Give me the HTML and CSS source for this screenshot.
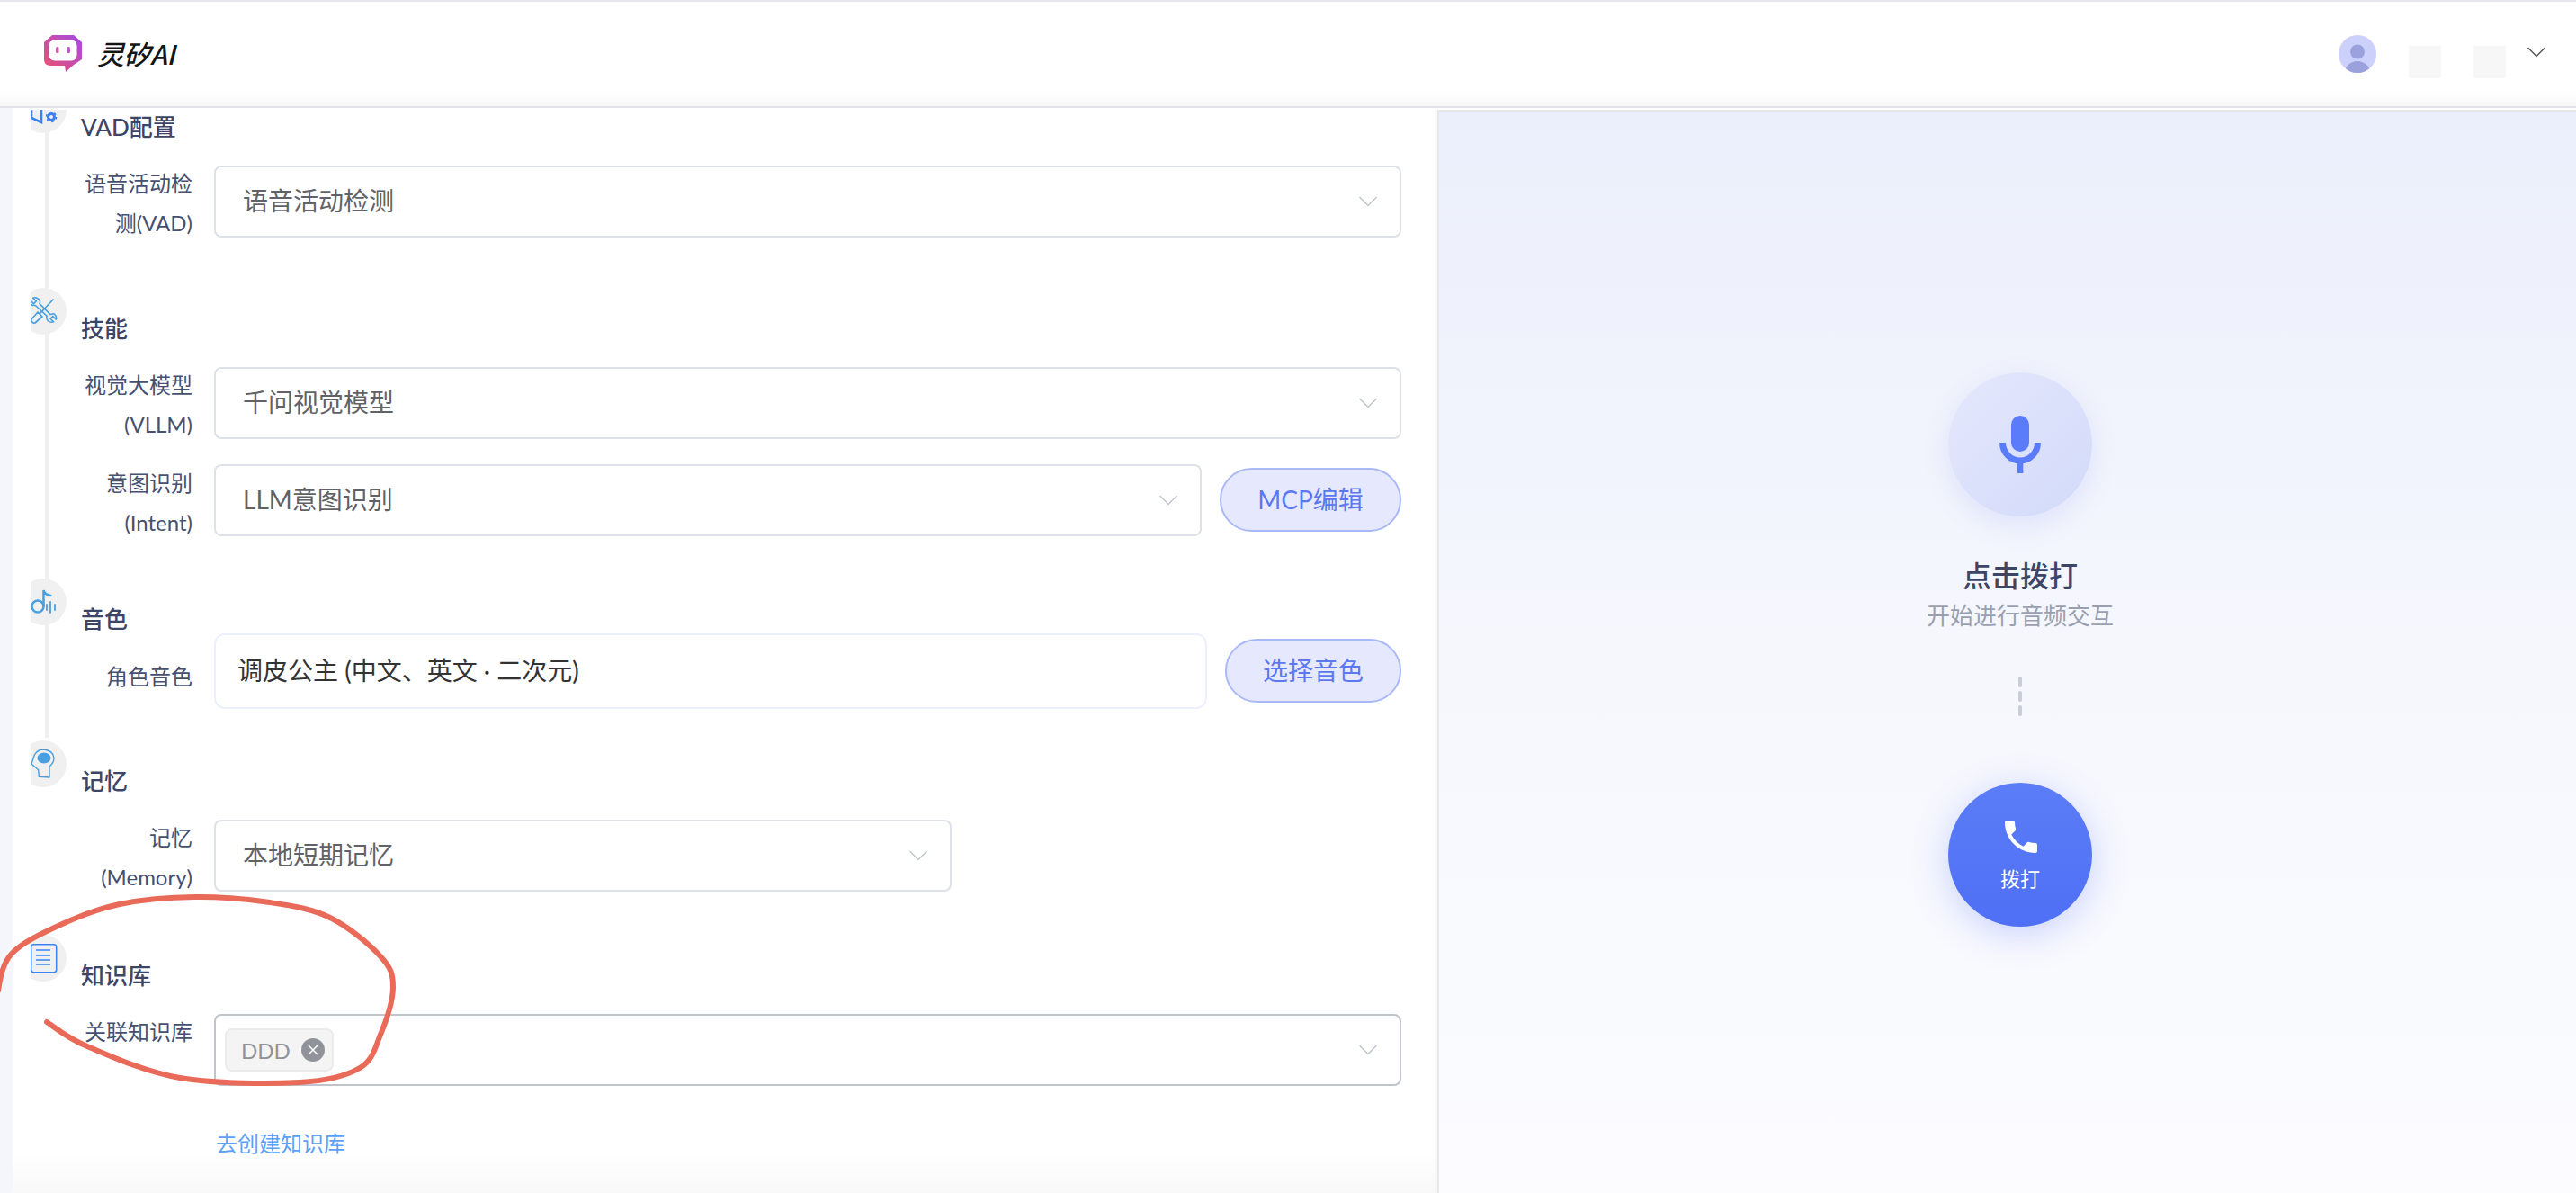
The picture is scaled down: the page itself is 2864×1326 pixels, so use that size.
FILE: index.html
```html
<!DOCTYPE html>
<html lang="zh-CN">
<head>
<meta charset="utf-8">
<title>灵矽AI</title>
<link rel="stylesheet" href="styles.css">
</head>
<body>
<div class="app">
  <header class="header">
    <div class="brand">
      <svg class="logo" viewBox="0 0 42 41">
        <defs><linearGradient id="lg" x1="0" y1="1" x2="1" y2="0"><stop offset="0" stop-color="#f0506a"/><stop offset="1" stop-color="#a24be6"/></linearGradient></defs>
        <path d="M9 0H33L42 8V27L33 33L24 41L23 34H7Q0 34 0 27V8Z" fill="url(#lg)"/>
        <rect x="5.500" y="5.500" width="31" height="23" rx="6" fill="#fff"/>
        <rect x="13" y="13" width="3.500" height="7" rx="1.500" fill="#d95aa8"/>
        <rect x="25.500" y="13" width="3.500" height="7" rx="1.500" fill="#c455c8"/>
      </svg>
      <span class="brand-name">灵矽AI</span>
    </div>
    <div class="user">
      <svg class="avatar" viewBox="0 0 42 42">
        <defs><clipPath id="ac"><circle cx="21" cy="21" r="21"/></clipPath></defs>
        <circle cx="21" cy="21" r="21" fill="#ccd1fb"/>
        <g clip-path="url(#ac)" fill="#9aa1dd"><circle cx="21" cy="18.500" r="8"/><ellipse cx="21" cy="42" rx="14" ry="13"/></g>
      </svg>
      <span class="blank"></span>
      <span class="blank"></span>
      <svg class="user-arrow" viewBox="0 0 20 12"><path d="M.5 1 10 10.500 19.500 1" fill="none" stroke="#555" stroke-width="1.500"/></svg>
    </div>
  </header>

  <main class="main">
    <section class="config">
      <div class="rail"></div>

      <div class="group group-first">
        <h2 class="title">
          <span class="node"><svg viewBox="0 0 52 52"><path d="M13 26v9l11 5V26" fill="none" stroke="#3b7ff0" stroke-width="2.500"/><circle cx="35" cy="34" r="3.500" fill="none" stroke="#3b7ff0" stroke-width="3"/><circle cx="35" cy="34" r="5.500" fill="none" stroke="#3b7ff0" stroke-width="1.500" stroke-dasharray="2.500 3.260"/></svg></span>
          VAD配置
        </h2>
        <div class="row">
          <label class="label">语音活动检测(VAD)</label>
          <div class="select"><span class="value">语音活动检测</span><svg class="arrow" viewBox="0 0 20 12"><path d="M.5 1 10 10.500 19.500 1"/></svg></div>
        </div>
      </div>

      <div class="group group-skill">
        <h2 class="title">
          <span class="node"><svg viewBox="0 0 52 52" fill="none" stroke="#4a9fe0" stroke-width="1.700" stroke-linejoin="round" stroke-linecap="round"><path d="M14 13l4 4 3-3-4-4c3-1 7 0 8 3 1 2 0 4 0 4l13 13 4-1c2 1 4 4 3 7l-4-4-3 3 4 4c-3 1-7 0-8-3-1-2 0-4 0-4L20 19l-3 0c-3-1-4-4-3-6z" transform="translate(-1 2) scale(.92)"/><path d="M37 13 23 28"/><path d="M20 27l5 5-8 7c-2 1-5-2-4-4z"/></svg></span>
          技能
        </h2>
        <div class="row">
          <label class="label">视觉大模型(VLLM)</label>
          <div class="select"><span class="value">千问视觉模型</span><svg class="arrow" viewBox="0 0 20 12"><path d="M.5 1 10 10.500 19.500 1"/></svg></div>
        </div>
        <div class="row row-next">
          <label class="label label-high">意图识别(Intent)</label>
          <div class="select"><span class="value">LLM意图识别</span><svg class="arrow" viewBox="0 0 20 12"><path d="M.5 1 10 10.500 19.500 1"/></svg></div>
          <button class="pill pill-mcp">MCP编辑</button>
        </div>
      </div>

      <div class="group group-voice">
        <h2 class="title">
          <span class="node"><svg viewBox="0 0 52 52" fill="none" stroke="#4a9fe0" stroke-linecap="round"><circle cx="20" cy="31" r="6.500" stroke-width="2.500"/><path d="M26.500 31V13q1 5 8 6" stroke-width="2.500"/><path d="M30 29v6M34 26v12M39 29v6" stroke-width="1.800"/></svg></span>
          音色
        </h2>
        <div class="row row-voice">
          <label class="label label-single">角色音色</label>
          <div class="voice-input">调皮公主 (中文、英文 · 二次元)</div>
          <button class="pill pill-voice">选择音色</button>
        </div>
      </div>

      <div class="group group-memory">
        <h2 class="title">
          <span class="node"><svg viewBox="0 0 52 52"><path d="M21.300 40.300 20.700 32.700 13 26l3.300-10Q20 10 26.300 10 37 11 38 19.300 38 25 33 29V41Z" fill="none" stroke="#4a9fe0" stroke-width="1.400" stroke-linejoin="round"/><ellipse cx="27" cy="19.500" rx="7.500" ry="6" fill="#4a9fe0"/></svg></span>
          记忆
        </h2>
        <div class="row">
          <label class="label">记忆(Memory)</label>
          <div class="select select-short"><span class="value">本地短期记忆</span><svg class="arrow" viewBox="0 0 20 12"><path d="M.5 1 10 10.500 19.500 1"/></svg></div>
        </div>
      </div>

      <div class="group group-kb">
        <h2 class="title">
          <span class="node"><svg viewBox="0 0 52 52" fill="none" stroke="#3b82f6"><rect x="12.700" y="10.700" width="28" height="31" rx="3" stroke-width="1.500"/><path d="M18 17h16M18 23h16M18 28h16M18 33h16" stroke-width="1.300"/></svg></span>
          知识库
        </h2>
        <div class="row">
          <label class="label">关联知识库</label>
          <div class="select select-active">
            <span class="tag">DDD<i class="tag-close"><svg viewBox="0 0 26 26"><path d="M8 8l10 10M18 8 8 18" stroke="#fff" stroke-width="1.500"/></svg></i></span>
            <svg class="arrow" viewBox="0 0 20 12"><path d="M.5 1 10 10.500 19.500 1"/></svg>
          </div>
        </div>
        <a class="create-link">去创建知识库</a>
      </div>
    </section>

    <section class="call">
      <div class="mic">
        <svg viewBox="0 0 46 64" class="mic-icon"><rect x="13" y="0" width="20" height="40" rx="10" fill="#5b7cfa"/><path d="M3.500 30a19.500 20 0 0 0 39 0" fill="none" stroke="#5b7cfa" stroke-width="7"/><rect x="19.800" y="50" width="6.500" height="14" fill="#5b7cfa"/></svg>
      </div>
      <div class="call-title">点击拨打</div>
      <div class="call-sub">开始进行音频交互</div>
      <div class="dashes"><i></i><i></i><i></i></div>
      <div class="dial">
        <svg viewBox="0 0 24 24" class="dial-icon"><path fill="#fff" d="M6.620 10.790c1.440 2.830 3.760 5.140 6.590 6.590l2.200-2.200c.27-.27.67-.36 1.020-.24 1.120.37 2.330.57 3.570.57.550 0 1 .45 1 1V20c0 .55-.45 1-1 1-9.390 0-17-7.610-17-17 0-.55.45-1 1-1h3.500c.55 0 1 .45 1 1 0 1.250.2 2.450.57 3.570.11.35.03.74-.25 1.020l-2.200 2.200z"/></svg>
        <span class="dial-text">拨打</span>
      </div>
    </section>
  </main>

  <svg class="scribble" viewBox="0 0 2864 1326">
    <path d="M52 1136C59.500 1140.500 72.300 1152.700 97 1163C121.700 1173.300 160.700 1191.300 200 1198C239.300 1204.700 299.700 1204.800 333 1203C366.300 1201.200 385 1195.800 400 1187C415 1178.200 416.800 1165 423 1150C429.200 1135 437 1111.500 437 1097C437 1082.500 434.700 1075.800 423 1063C411.300 1050.200 387.500 1030 367 1020C346.500 1010 325 1006.800 300 1003C275 999.200 244.800 996.700 217 997C189.200 997.300 158 999.800 133 1005C108 1010.200 87 1018.800 67 1028C47 1037.200 24.200 1047.800 13 1060C1.800 1072.200 0 1090 -2 1101" fill="none" stroke="#e96a58" stroke-width="6" stroke-linecap="round"/>
  </svg>
</div>
</body>
</html>
```
FILE: styles.css
```css
* { box-sizing: border-box; }
html, body { margin: 0; height: 100%; overflow: hidden; }
body {
  font-family: "Lato", "Noto Sans CJK SC", sans-serif;
  color: #3d4566;
  background: #fff;
}
.app {
  position: relative;
  width: 2864px;
  height: 1326px;
  display: flex;
  flex-direction: column;
  border-top: 2px solid #e6e6ec;
}
.header {
  height: 118px;
  flex: none;
  display: flex;
  align-items: center;
  justify-content: space-between;
  padding: 0 34px 0 49px;
  background: linear-gradient(#fff 86%, #f8f8f8);
  border-bottom: 2px solid #e2e2e8;
}
.brand { display: flex; align-items: center; gap: 17px; margin-bottom: 2px; }
.logo { width: 42px; height: 41px; }
.brand-name {
  font-size: 30px;
  font-style: italic;
  font-weight: 500;
  letter-spacing: -.5px;
  color: #151515;
  font-family: "Noto Sans CJK SC", sans-serif;
}
.user { display: flex; align-items: center; }
.avatar { width: 42px; height: 42px; margin-right: 36px; }
.blank { width: 36px; height: 36px; margin: 18px 36px 0 0; background: #f7f7f7; }
.blank + .blank { margin-right: 24px; }
.user-arrow { width: 20px; height: 12px; margin-bottom: 4px; }

.main { flex: 1; display: flex; min-height: 0; padding: 2px 0 0 14px; background: linear-gradient(90deg, #f5f6fb 14px, #fff 14px); }

.config {
  position: relative;
  width: 1586px;
  flex: none;
  overflow: hidden;
  padding: 4px 42px 0 76px;
  border-top-left-radius: 24px;
  background: linear-gradient(#fff calc(100% - 44px), #f8f8f9);
  box-shadow: inset -2px 0 0 #e8e8ea, inset -10px 0 8px -8px #f4f4f4;
}
.rail { position: absolute; left: 36px; top: 0; width: 4px; height: 698px; background: #f0f0f2; }

.group-skill { margin-top: 86px; }
.group-voice { margin-top: 77px; }
.group-memory { margin-top: 65px; }
.group-kb { margin-top: 78px; }

.title {
  position: relative;
  margin: 0 0 28px;
  height: 30px;
  line-height: 30px;
  font-size: 26px;
  font-weight: 500;
  color: #3d4566;
}
.node {
  position: absolute;
  left: -68px;
  top: -30px;
  width: 52px;
  height: 52px;
  border-radius: 50%;
  background: #f0f0f0;
  clip-path: inset(0 0 0 12px);
}
.node svg { display: block; width: 52px; height: 52px; }

.row { display: flex; align-items: flex-start; height: 80px; gap: 20px; }
.row-next { margin-top: 28px; }
.row-voice { height: 84px; margin-top: -27px; }
.label {
  width: 124px;
  flex: none;
  margin: -2px 4px 0 0;
  text-align: right;
  font-size: 24px;
  line-height: 44px;
  color: #465070;
}
.label-high { margin-top: -1px; }
.label-single { margin-top: 26px; }

.select {
  flex: 1;
  height: 80px;
  display: flex;
  align-items: center;
  justify-content: space-between;
  padding: 0 25px 0 30px;
  border: 2px solid #dfe1e8;
  border-radius: 8px;
  background: #fff;
  font-size: 28px;
  color: #606266;
}
.value { margin-top: -4px; }
.select-short { flex: none; width: 820px; }
.select-active { border-color: #c0c4cc; padding-left: 10px; }
.arrow { width: 20px; height: 12px; fill: none; stroke: #c0c4cc; stroke-width: 1.500; }

.voice-input {
  flex: 1;
  height: 84px;
  display: flex;
  align-items: center;
  padding: 0 0 4px 24px;
  border: 2px solid #ecf0fd;
  border-radius: 12px;
  font-size: 28px;
  color: #333;
}
.pill {
  flex: none;
  height: 71px;
  padding: 0 0 3px;
  border: 2px solid #a9b9f8;
  border-radius: 36px;
  background: #e6e9fd;
  color: #5b78f0;
  font-family: inherit;
  font-size: 28px;
  align-self: center;
}
.pill-mcp { width: 202px; margin-top: -1px; }
.pill-voice { width: 196px; margin-top: -1px; }

.tag {
  display: flex;
  align-items: center;
  height: 48px;
  padding: 0 8px 0 16px;
  gap: 12px;
  border: 2px solid #ebebee;
  border-radius: 8px;
  background: #f4f4f5;
  color: #909399;
  font-size: 24px;
}
.tag-close { display: block; width: 26px; height: 26px; border-radius: 50%; background: #909399; }
.tag-close svg { display: block; width: 26px; height: 26px; }

.create-link {
  display: block;
  margin: 44px 0 0 150px;
  font-size: 24px;
  line-height: 40px;
  color: #5ba1f7;
}

.call {
  flex: 1;
  display: flex;
  flex-direction: column;
  align-items: center;
  padding: 290px 0 0 28px;
  border-top: 2px solid #e8e8e8;
  background: linear-gradient(#ebeffb 0%, #f5f7fd 50%, #fcfcff 100%);
}
.mic {
  width: 160px;
  height: 160px;
  display: flex;
  align-items: center;
  justify-content: center;
  border-radius: 50%;
  background: linear-gradient(135deg, #e5e8fd, #d2daf9);
  box-shadow: 0 10px 30px rgba(100, 120, 240, .14);
}
.mic-icon { width: 46px; height: 64px; }
.call-title { margin-top: 46px; font-size: 32px; line-height: 40px; font-weight: 500; color: #3d4566; }
.call-sub { margin-top: 4px; font-size: 26px; line-height: 40px; color: #9a9fb0; }
.dashes { display: flex; flex-direction: column; gap: 4px; margin-top: 48px; }
.dashes i { display: block; width: 4px; height: 12px; border-radius: 2px; background: #c8ccdb; }
.dial {
  width: 160px;
  height: 160px;
  margin-top: 74px;
  display: flex;
  flex-direction: column;
  align-items: center;
  border-radius: 50%;
  padding-top: 36px;
  background: linear-gradient(#5b7df7, #4f6ff5);
  box-shadow: 0 8px 40px rgba(90, 120, 250, .3);
}
.dial-icon { width: 48px; height: 48px; flex: none; margin-left: 1px; }
.dial-text { margin-top: 6px; font-size: 22px; line-height: 34px; color: #fff; }

.scribble { position: absolute; left: 0; top: -2px; width: 2864px; height: 1326px; pointer-events: none; }
```
